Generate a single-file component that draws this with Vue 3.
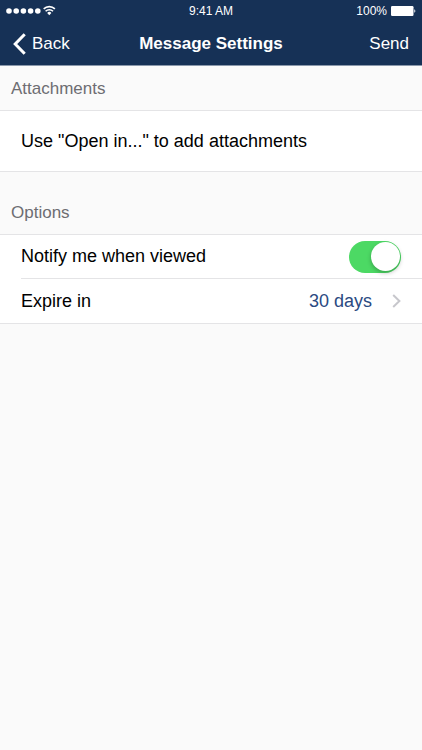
<script setup>
import { ref } from 'vue'

const notify = ref(true)
const expiry = ref('30 days')
</script>

<template>
  <div class="screen">
    <header class="top">
      <div class="status">
        <div class="signal">
          <svg width="50" height="12" viewBox="0 0 50 12" aria-hidden="true">
            <g fill="#fff">
              <circle cx="3" cy="6" r="2.8" />
              <circle cx="10.2" cy="6" r="2.8" />
              <circle cx="17.4" cy="6" r="2.8" />
              <circle cx="24.6" cy="6" r="2.8" />
              <circle cx="31.8" cy="6" r="2.8" />
              <path d="M41.2 7.9 a3 3 0 0 1 4.2 0 L43.3 10.2 Z" />
            </g>
            <g fill="none" stroke="#fff" stroke-width="1.6">
              <path d="M39.6 6.2 a5.3 5.3 0 0 1 7.4 0" />
              <path d="M37.7 3.9 a8 8 0 0 1 11.2 0" />
            </g>
          </svg>
        </div>
        <span class="clock">9:41 AM</span>
        <div class="power">
          <span>100%</span>
          <svg width="25" height="10" viewBox="0 0 25 10" aria-hidden="true">
            <rect x="0" y="0" width="22.5" height="10" rx="1.2" fill="#fff" />
            <path d="M23.3 3.3 a1.9 1.9 0 0 1 0 3.4 Z" fill="#fff" />
          </svg>
        </div>
      </div>
      <nav class="bar">
        <button type="button" class="back">
          <svg width="13" height="22" viewBox="0 0 13 22" aria-hidden="true">
            <path d="M11.7 1.3 L2.2 11 L11.7 20.7" fill="none" stroke="#fff" stroke-width="3" />
          </svg>
          <span>Back</span>
        </button>
        <h1>Message Settings</h1>
        <button type="button" class="send">Send</button>
      </nav>
    </header>

    <main>
      <section>
        <h2>Attachments</h2>
        <div class="group">
          <p class="row tall">Use "Open in..." to add attachments</p>
        </div>
      </section>
      <section>
        <h2 class="spaced">Options</h2>
        <div class="group">
          <label class="row" for="notify">
            <span>Notify me when viewed</span>
            <input id="notify" v-model="notify" type="checkbox" role="switch" class="switch" />
          </label>
          <button type="button" class="row divided">
            <span>Expire in</span>
            <span class="value">
              {{ expiry }}
              <svg width="9" height="14" viewBox="0 0 9 14" aria-hidden="true">
                <path d="M1.2 1 L7.4 7 L1.2 13" fill="none" stroke="#c7c7cc" stroke-width="2" />
              </svg>
            </span>
          </button>
        </div>
      </section>
    </main>
  </div>
</template>

<style>
body {
  margin: 0;
  background: #fafafa;
}
</style>

<style scoped>
.screen {
  min-height: 100vh;
  background: #fafafa;
  color: #000;
  font-family: "Liberation Sans", Arial, sans-serif;
  font-size: 17px;
}

button {
  margin: 0;
  padding: 0;
  border: 0;
  background: none;
  color: inherit;
  font: inherit;
  text-align: left;
}

svg {
  display: block;
}

.top {
  border-bottom: 1px solid #8a98ab;
  background: #163156;
  color: #fff;
}

.status {
  display: grid;
  grid-template-columns: 1fr auto 1fr;
  align-items: center;
  height: 21px;
  padding: 0 6px;
  font-size: 12px;
}

.clock {
  font-weight: 500;
}

.power {
  display: flex;
  align-items: center;
  justify-content: flex-end;
  gap: 4px;
}

.bar {
  display: grid;
  grid-template-columns: 1fr auto 1fr;
  align-items: center;
  box-sizing: border-box;
  height: 44px;
  padding: 2px 13px 0;
}

.back {
  display: flex;
  align-items: center;
  gap: 6px;
}

.back,
.send {
  font-size: 17px;
  line-height: 22px;
}

.send {
  justify-self: end;
}

h1 {
  margin: 0;
  font-size: 17px;
  font-weight: 700;
  line-height: 22px;
}

h2 {
  margin: 0;
  padding: 13px 11px 11px;
  color: #6d6d72;
  font-size: 17px;
  font-weight: 400;
  line-height: 20px;
}

h2.spaced {
  padding-top: 31px;
}

.group {
  border: solid #e4e4e6;
  border-width: 1px 0;
  background: #fff;
}

.row {
  display: flex;
  align-items: center;
  justify-content: space-between;
  box-sizing: border-box;
  width: 100%;
  min-height: 43px;
  margin: 0;
  padding: 0 21px;
  font-size: 18px;
}

.row.tall {
  min-height: 60px;
}

.row.divided {
  width: calc(100% - 21px);
  min-height: 45px;
  margin-left: 21px;
  padding-left: 0;
  border-top: 1px solid #e4e4e6;
}

.value {
  display: flex;
  align-items: center;
  gap: 20px;
  color: #2b4a82;
}

.switch {
  display: flex;
  align-items: center;
  appearance: none;
  box-sizing: border-box;
  width: 52px;
  height: 32px;
  margin: 0;
  padding: 1px;
  border-radius: 16px;
  background: #d8d8dc;
}

.switch::before {
  width: 29px;
  height: 29px;
  border-radius: 50%;
  background: #fff;
  box-shadow: 0 2px 4px rgba(0, 0, 0, 0.25);
  content: "";
}

.switch:checked {
  justify-content: flex-end;
  background: #4cd964;
}
</style>
